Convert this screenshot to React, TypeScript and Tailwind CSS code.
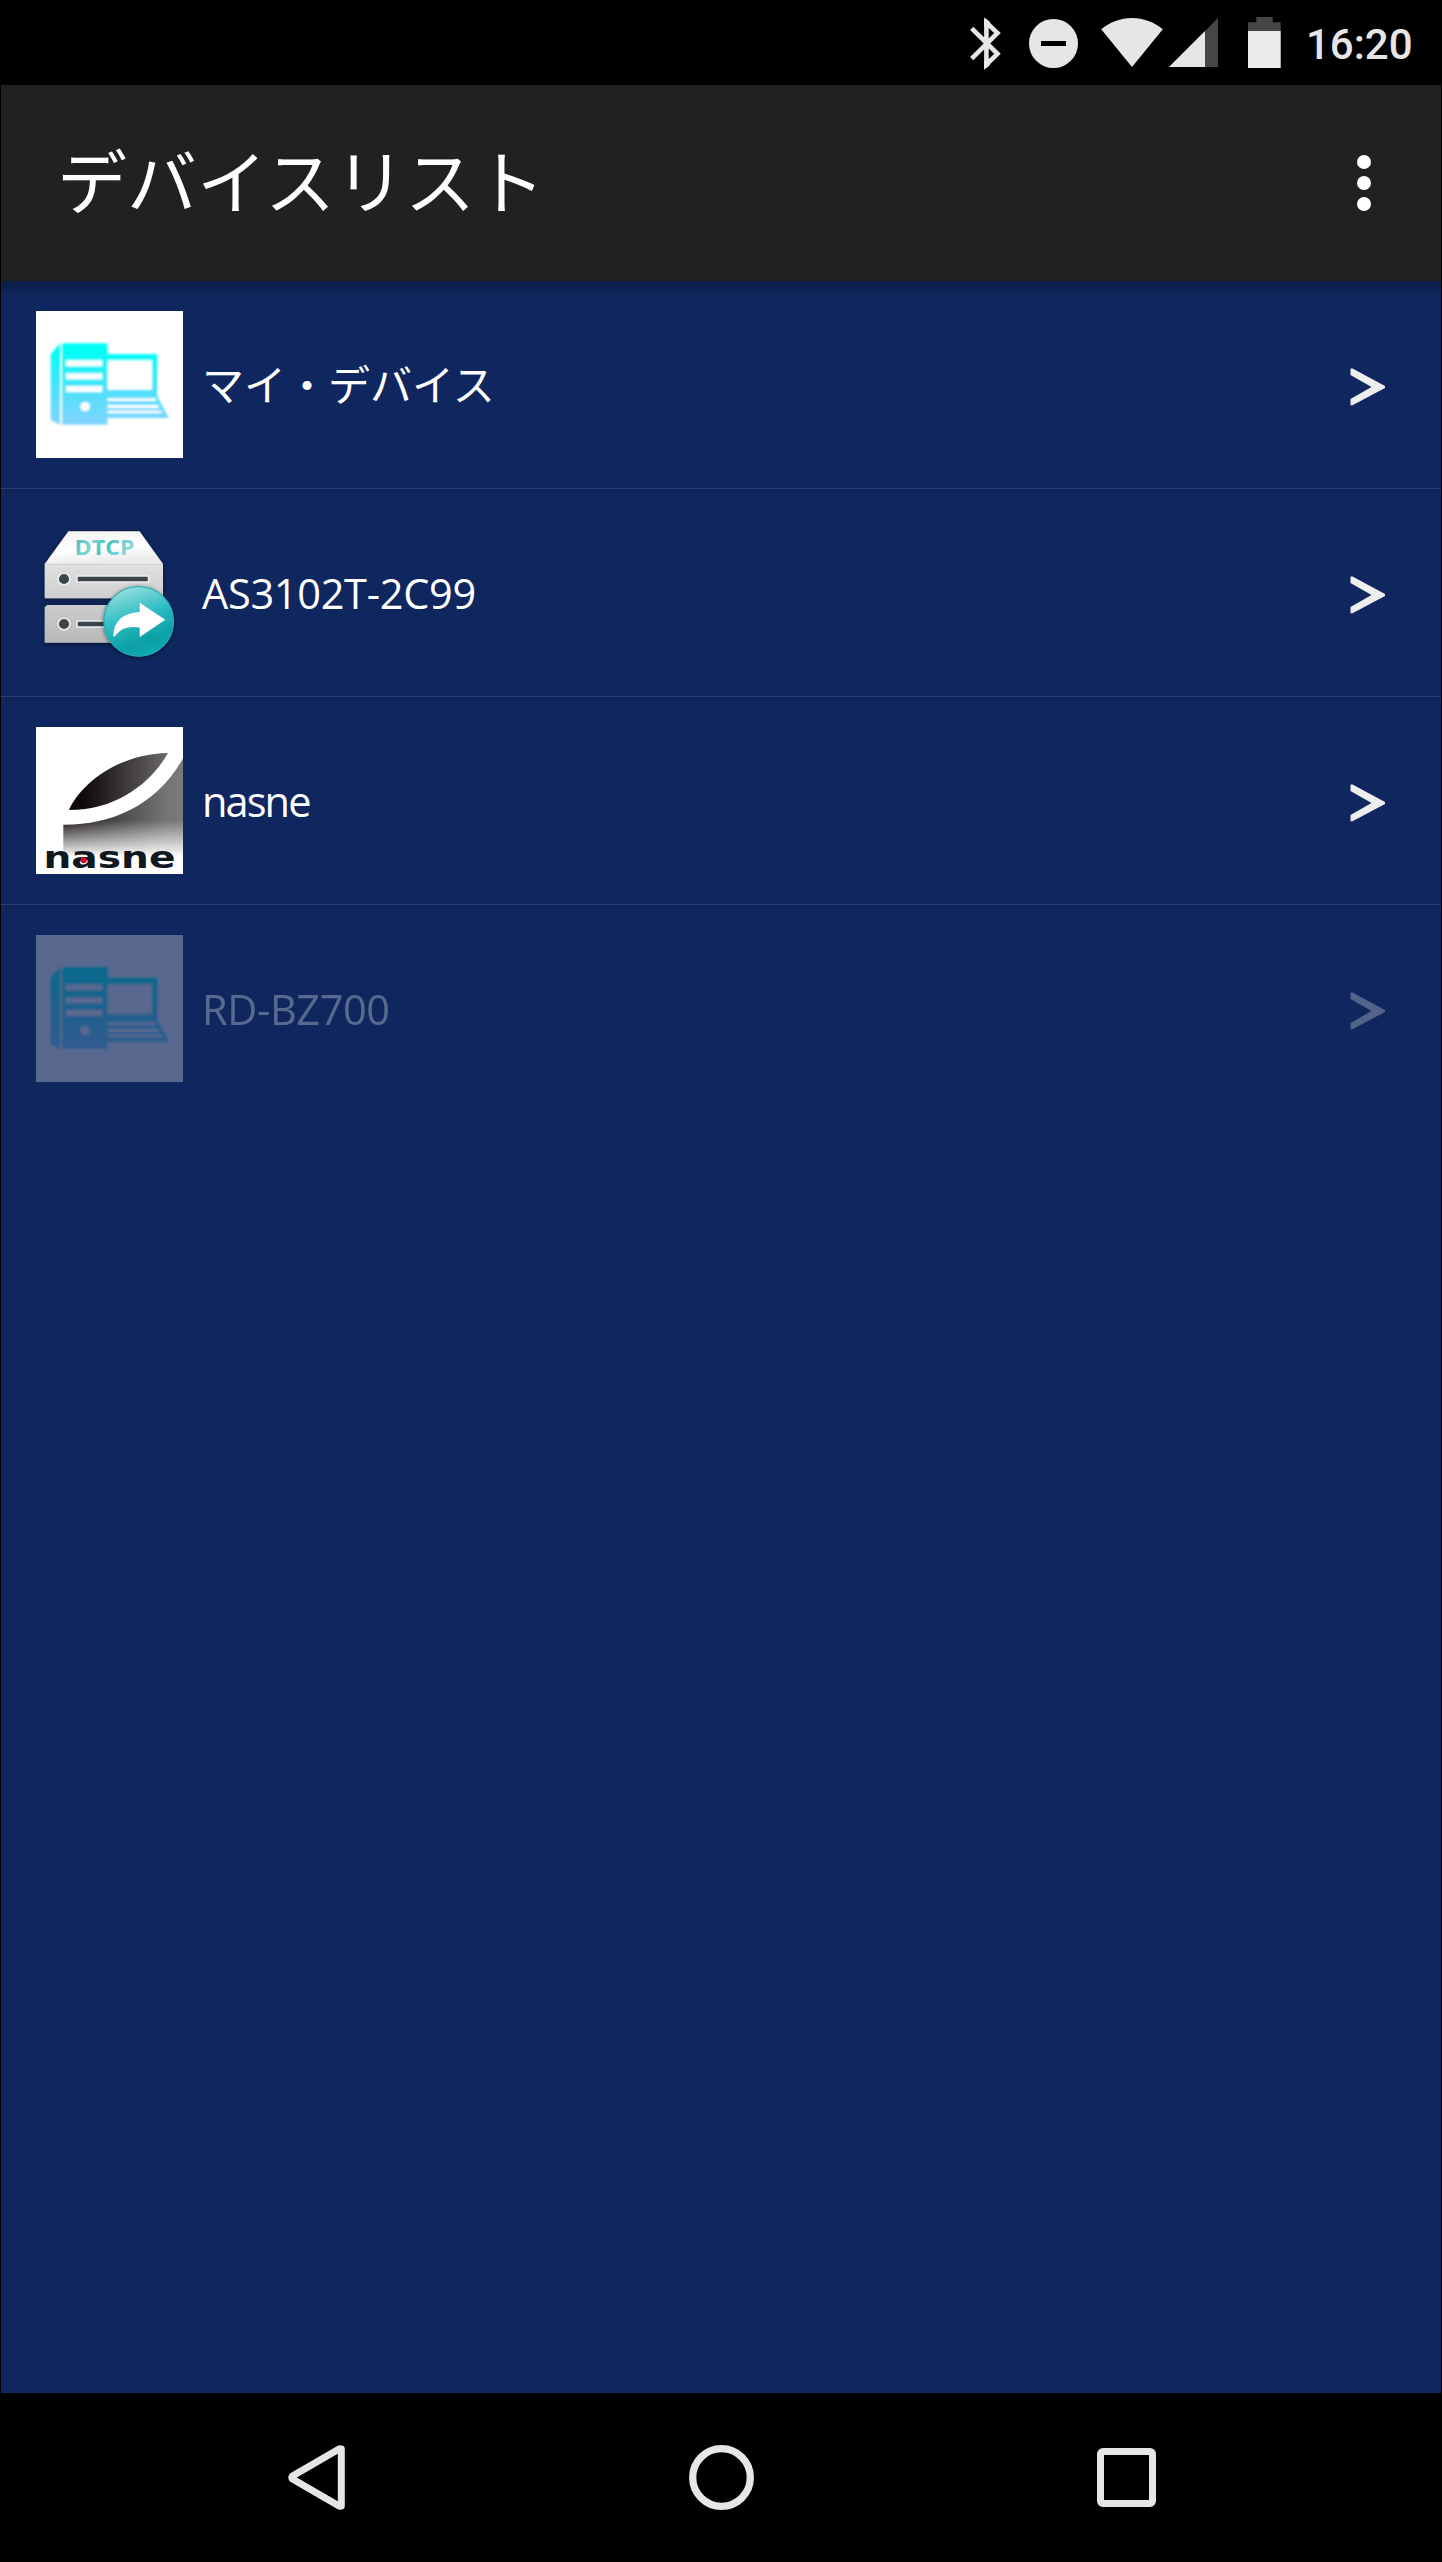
import React from "react";

type IconProps = { id: string };

type Device = {
  id: string;
  name: string;
  Icon: React.FC<IconProps>;
  nameClass: string;
  isOffline?: boolean;
};

const StatusBar: React.FC = () => {
  return (
    <div className="flex h-[85px] shrink-0 bg-black pl-[969px]">
      {/* bluetooth */}
      <svg className="h-[85px] w-[32px]" viewBox="969 0 32 85" fill="none" stroke="#e6e6e6" strokeWidth="4.6">
        <path d="M971.7 28.3 L997.5 53.8 L986.4 64.5 V22.5 L997.5 33 L971.7 58.7" />
        <path d="M984 19 H986.5 L990 22 V26 H984Z M984 68 H986.5 L990 65 V61 H984Z" fill="#e6e6e6" stroke="none" />
      </svg>
      {/* do not disturb */}
      <svg className="ml-[28px] h-[85px] w-[49px]" viewBox="1029 0 49 85">
        <circle cx="1053.5" cy="43.5" r="24.5" fill="#e6e6e6" />
        <rect x="1041" y="41" width="25" height="5" fill="#000" />
      </svg>
      {/* wifi */}
      <svg className="ml-[23px] h-[85px] w-[62px]" viewBox="1101 0 62 85">
        <path d="M1132 67 L1101.2 29.2 C1110 22 1120.5 18 1132 18 C1143.5 18 1154 22 1162.8 29.2 Z" fill="#e6e6e6" />
      </svg>
      {/* signal */}
      <svg className="ml-[6px] h-[85px] w-[49px]" viewBox="1169 0 49 85">
        <path d="M1169 67 L1218 18 V67Z" fill="#464646" />
        <path d="M1169 67 L1205 31 V67Z" fill="#e6e6e6" />
      </svg>
      {/* battery */}
      <svg className="ml-[30px] h-[85px] w-[33px]" viewBox="1248 0 33 85">
        <path d="M1256.3 17 H1272.7 V22.3 H1280.7 V31 H1248 V22.3 H1256.3Z" fill="#464646" />
        <rect x="1248" y="31" width="32.7" height="37" fill="#ebebeb" />
      </svg>
      <span className="ml-[25px] mt-[2px] font-['Roboto',sans-serif] text-[42px] font-medium leading-[85px] text-[#e6e6e6]">16:20</span>
    </div>
  );
};

const AppBar: React.FC = () => {
  return (
    <header className="flex h-[196px] shrink-0 items-center justify-between bg-[#212121] pl-[56px] pr-[70px]">
      <h1 className="pb-[8px] font-['Noto_Sans_CJK_JP',sans-serif] text-[70px] leading-none text-white">デバイスリスト</h1>
      <div className="flex flex-col gap-[7px]">
        <span className="size-[14px] rounded-full bg-white" />
        <span className="size-[14px] rounded-full bg-white" />
        <span className="size-[14px] rounded-full bg-white" />
      </div>
    </header>
  );
};

const ComputerIcon: React.FC<IconProps> = ({ id }) => {
  return (
    <svg className="size-[147px] shrink-0 bg-white" viewBox="0 0 147 147">
      <defs>
        <linearGradient id={`${id}-cyan`} gradientUnits="userSpaceOnUse" x1="0" y1="38" x2="0" y2="112">
          <stop offset="0" stopColor="#00fff5" />
          <stop offset="0.6" stopColor="#52dffc" />
          <stop offset="1" stopColor="#7fd5ff" />
        </linearGradient>
        <filter id={`${id}-soft`}>
          <feGaussianBlur stdDeviation="0.9" />
        </filter>
      </defs>
      <g filter={`url(#${id}-soft)`}>
        <g fill={`url(#${id}-cyan)`}>
          <path d="M14.7 43 L24 32.3 V114 L14.7 109Z" />
          <path d="M26.2 32.3 H71.5 V113.7 H26.2Z" />
          <path d="M71 43 H121.3 V85 L133 107 H71Z" />
        </g>
        <g fill="#fff">
          <rect x="30" y="49.3" width="36.3" height="6" />
          <rect x="30" y="62.3" width="36.3" height="6" />
          <rect x="30" y="75" width="36.3" height="6" />
          <circle cx="49" cy="95.7" r="4.8" />
          <rect x="71.5" y="49.3" width="44.5" height="29.5" />
          <rect x="71.5" y="87.3" width="48.5" height="2.7" />
          <rect x="71.5" y="94" width="51" height="3" />
          <rect x="71.5" y="99.6" width="54" height="2.6" />
        </g>
      </g>
    </svg>
  );
};

const ServerIcon: React.FC<IconProps> = ({ id }) => {
  return (
    <svg className="size-[147px] shrink-0" viewBox="0 0 147 147">
      <defs>
        <linearGradient id={`${id}-top`} x1="0" y1="0" x2="0.3" y2="1">
          <stop offset="0" stopColor="#f2f2f2" />
          <stop offset="0.6" stopColor="#ffffff" />
          <stop offset="1" stopColor="#ebebeb" />
        </linearGradient>
        <linearGradient id={`${id}-body`} gradientUnits="userSpaceOnUse" x1="0" y1="45" x2="0" y2="124">
          <stop offset="0" stopColor="#e0e0e0" />
          <stop offset="1" stopColor="#b9b9b9" />
        </linearGradient>
        <linearGradient id={`${id}-text`} x1="0" y1="0" x2="1" y2="0.3">
          <stop offset="0" stopColor="#35b9bd" />
          <stop offset="0.35" stopColor="#7fd3d5" />
          <stop offset="0.6" stopColor="#45bfc2" />
          <stop offset="1" stopColor="#8edadb" />
        </linearGradient>
        <linearGradient id={`${id}-badge`} x1="0.25" y1="0" x2="0.6" y2="1">
          <stop offset="0" stopColor="#9fe0e1" />
          <stop offset="0.45" stopColor="#2dbdc3" />
          <stop offset="0.8" stopColor="#0c9fa6" />
          <stop offset="1" stopColor="#11aab0" />
        </linearGradient>
        <filter id={`${id}-shadow`} x="-20%" y="-20%" width="140%" height="140%">
          <feDropShadow dx="0" dy="1" stdDeviation="2" floodColor="#000" floodOpacity="0.55" />
        </filter>
      </defs>
      <g filter={`url(#${id}-shadow)`}>
        <path d="M32.5 12.3 H103.5 L127 45 H8.7Z" fill={`url(#${id}-top)`} />
        <rect x="8.7" y="45" width="118.3" height="34.3" fill={`url(#${id}-body)`} />
        <path d="M11 86 H127 V123.7 H8.7 V88.5Z" fill={`url(#${id}-body)`} />
        <path d="M8.7 45.3 H127" stroke="#cfcfcf" />
      </g>
      <text
        x="38.5"
        y="35.7"
        textLength="60"
        lengthAdjust="spacingAndGlyphs"
        fill={`url(#${id}-text)`}
        className="font-['Open_Sans',sans-serif] text-[21px] font-bold"
      >
        DTCP
      </text>
      <g fill="#3a444b" stroke="#eeeeee" strokeWidth="1.5">
        <circle cx="28" cy="60" r="5.8" />
        <circle cx="28" cy="105" r="5.8" />
        <rect x="41" y="57" width="71.5" height="6" />
        <rect x="41" y="102" width="50" height="6" />
      </g>
      <g filter={`url(#${id}-shadow)`}>
        <circle cx="102.7" cy="102.3" r="34.8" fill={`url(#${id}-badge)`} stroke="#1fb2b8" strokeWidth="1.2" />
      </g>
      <path
        d="M103.7 83.7 L129.3 100.7 L103.7 118 V108.5 C93 106.5 84 109.5 79 117.3 C77.5 118.5 77 117 77.3 115.5 C78 102 87 94 103.7 93Z"
        fill="#fff"
      />
    </svg>
  );
};

const NasneIcon: React.FC<IconProps> = ({ id }) => {
  return (
    <svg className="size-[147px] shrink-0 bg-white" viewBox="0 0 147 147">
      <defs>
        <linearGradient id={`${id}-leaf`} x1="0" y1="0" x2="1" y2="0">
          <stop offset="0.15" stopColor="#0f090b" />
          <stop offset="1" stopColor="#6c696a" />
        </linearGradient>
        <linearGradient id={`${id}-base`} x1="0" y1="0" x2="1" y2="0">
          <stop offset="0" stopColor="#1c1718" />
          <stop offset="0.85" stopColor="#757374" />
          <stop offset="1" stopColor="#7b797a" />
        </linearGradient>
        <linearGradient id={`${id}-fade`} gradientUnits="userSpaceOnUse" x1="0" y1="93" x2="0" y2="130">
          <stop offset="0" stopColor="#fff" stopOpacity="0" />
          <stop offset="1" stopColor="#fff" />
        </linearGradient>
      </defs>
      <path d="M33 83 C42 61 78 27 132 26 C116 54 83 83 33 83Z" fill={`url(#${id}-leaf)`} />
      <path d="M27.3 97.7 C76 98 121 78 147 31.3 V130 H27.3Z" fill={`url(#${id}-base)`} />
      <rect x="27" y="88" width="120" height="43" fill={`url(#${id}-fade)`} />
      <text
        x="7.5"
        y="141.3"
        textLength="132"
        lengthAdjust="spacingAndGlyphs"
        fill="#10191f"
        className="font-['DejaVu_Sans',sans-serif] text-[31px] font-bold"
      >
        nasne
      </text>
      <circle cx="47.7" cy="133.3" r="3" fill="#e6002d" />
    </svg>
  );
};

const Chevron: React.FC = () => {
  return (
    <svg className="ml-auto mt-[5px] h-[40px] w-[36px] shrink-0" viewBox="0 0 36 40">
      <path d="M0.5 1.5 H2.5 L35 19 V21 L2.5 38.3 H0.5 V32 L21.5 20 L0.5 8Z" fill="#eeeeee" />
    </svg>
  );
};

const devices: Device[] = [
  {
    id: "my-device",
    name: "マイ・デバイス",
    Icon: ComputerIcon,
    nameClass: "pb-[3px] font-['Noto_Sans_CJK_JP',sans-serif] text-[42px]",
  },
  {
    id: "as3102t",
    name: "AS3102T-2C99",
    Icon: ServerIcon,
    nameClass: "pt-[3px] font-['Open_Sans',sans-serif] text-[41.5px] tracking-[-0.3px]",
  },
  {
    id: "nasne",
    name: "nasne",
    Icon: NasneIcon,
    nameClass: "pt-[3px] font-['Open_Sans',sans-serif] text-[41.5px] tracking-[-1.9px]",
  },
  {
    id: "rd-bz700",
    name: "RD-BZ700",
    Icon: ComputerIcon,
    nameClass: "pt-[3px] font-['Open_Sans',sans-serif] text-[41.5px] tracking-[-0.4px]",
    isOffline: true,
  },
];

const DeviceRow: React.FC<{ device: Device; isLast: boolean }> = ({ device, isLast }) => {
  const { id, name, Icon, nameClass, isOffline } = device;

  return (
    <li className={isLast ? "h-[208px]" : "h-[208px] border-b border-[#2d4170]"}>
      <div className={`flex h-[207px] items-center pl-[35px] pr-[55px] ${isOffline ? "opacity-30" : ""}`}>
        <Icon id={id} />
        <span className={`ml-[19px] leading-none text-white ${nameClass}`}>{name}</span>
        <Chevron />
      </div>
    </li>
  );
};

const NavigationBar: React.FC = () => {
  return (
    <nav className="flex h-[169px] shrink-0 items-center bg-black pl-[288px]">
      <svg className="h-[65px] w-[57px]" viewBox="0 0 57 65" fill="none" stroke="#e6e6e6" strokeWidth="7" strokeLinejoin="round">
        <path d="M53.3 4 V61 L51.5 61.2 L4.5 34 Q3 32.5 4.5 31 L51.5 3.8Z" />
      </svg>
      <svg className="ml-[344px] size-[65px]" viewBox="0 0 65 65" fill="none" stroke="#e6e6e6" strokeWidth="7.3">
        <circle cx="32.5" cy="32.5" r="28.8" />
      </svg>
      <div className="ml-[343px] size-[59px] rounded-[6px] border-[7px] border-[#e6e6e6]" />
    </nav>
  );
};

export default function App() {
  return (
    <div className="flex h-[2562px] w-[1442px] flex-col overflow-hidden bg-black">
      <StatusBar />
      <div className="flex flex-1 flex-col px-px">
        <AppBar />
        <main className="relative flex-1 bg-[#0f275e]">
          {/* shadow under the app bar */}
          <div className="absolute inset-x-0 top-0 h-[16px] bg-gradient-to-b from-black/25 to-transparent" />
          <ul>
            {devices.map((device, index) => (
              <DeviceRow key={device.id} device={device} isLast={index === devices.length - 1} />
            ))}
          </ul>
        </main>
      </div>
      <NavigationBar />
    </div>
  );
}
